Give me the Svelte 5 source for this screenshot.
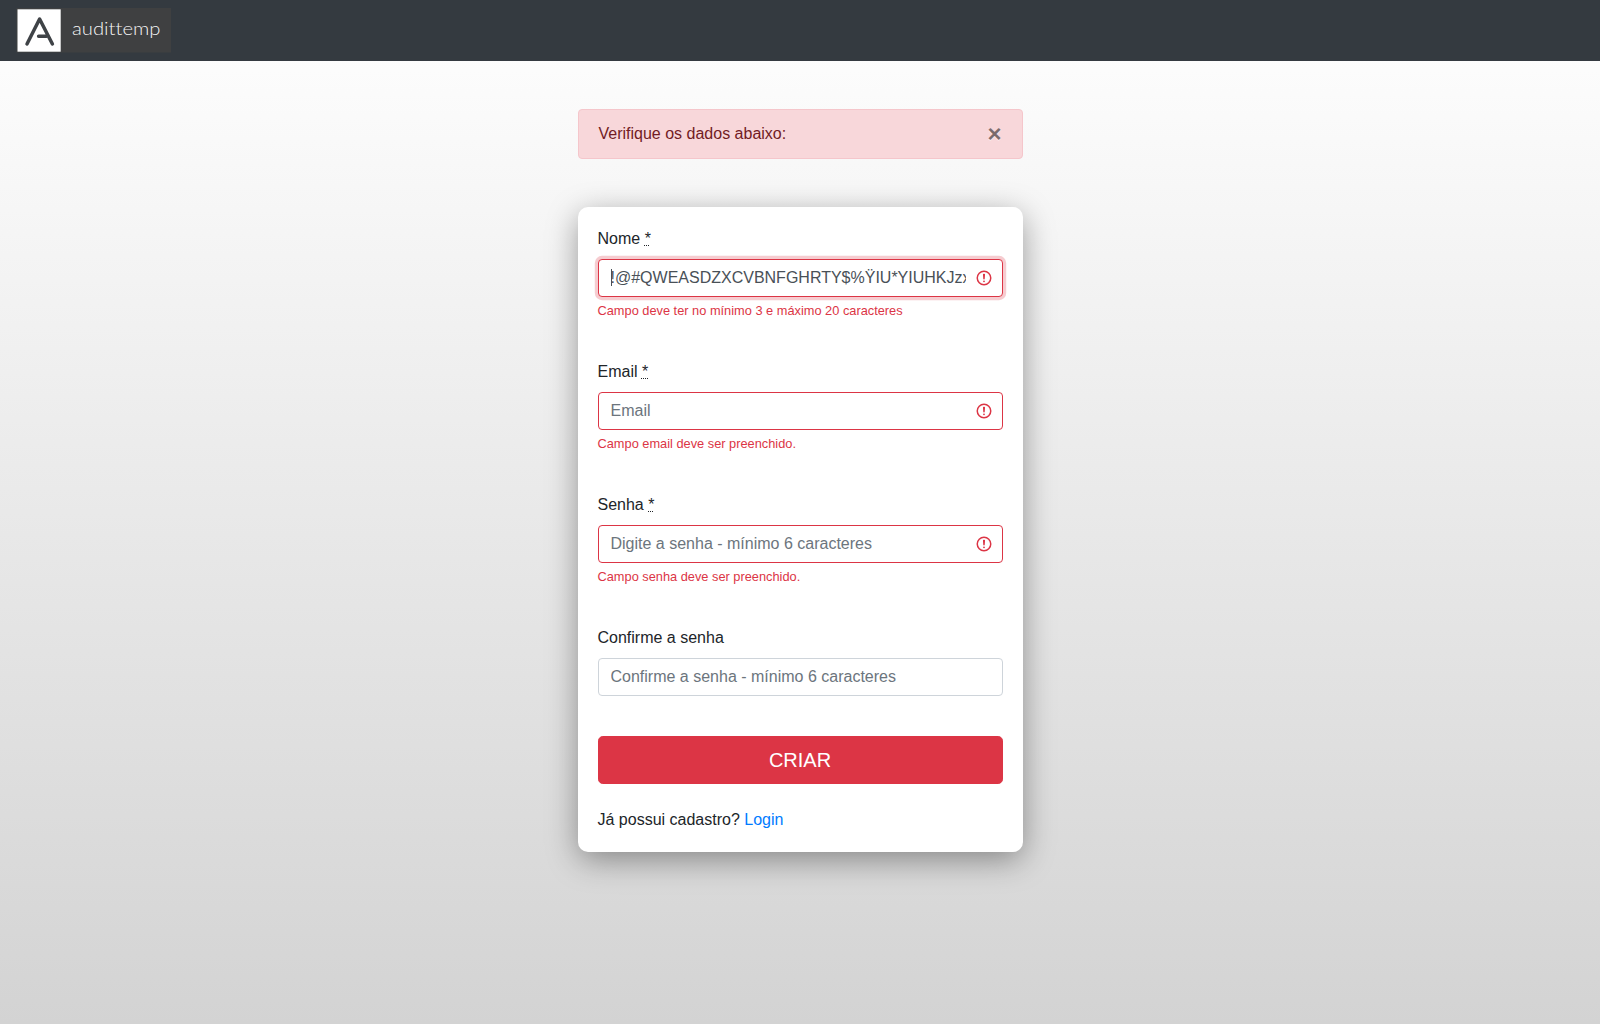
<script>
  const fields = [
    {
      id: 'nome',
      label: 'Nome',
      required: true,
      value: '!@#QWEASDZXCVBNFGHRTY$%ŸIU*YIUHKJzxcvbnm',
      placeholder: 'Nome',
      error: 'Campo deve ter no mínimo 3 e máximo 20 caracteres',
      focused: true
    },
    {
      id: 'email',
      label: 'Email',
      required: true,
      value: '',
      placeholder: 'Email',
      error: 'Campo email deve ser preenchido.'
    },
    {
      id: 'senha',
      label: 'Senha',
      required: true,
      value: '',
      placeholder: 'Digite a senha - mínimo 6 caracteres',
      error: 'Campo senha deve ser preenchido.'
    },
    {
      id: 'confirma',
      label: 'Confirme a senha',
      required: false,
      value: '',
      placeholder: 'Confirme a senha - mínimo 6 caracteres',
      error: ''
    }
  ];

  let alertOpen = $state(true);
</script>

<div class="page">
  <nav class="navbar">
    <a class="brand" href="#home" aria-label="audittemp">
      <svg width="155" height="45" viewBox="0 0 155 45">
        <rect x="0.5" width="154.5" height="44.5" fill="#3f4041" />
        <rect x="1.5" y="1.3" width="43.2" height="42.4" fill="#fff" />
        <path
          d="M11 36 L23.6 11 L36.4 36 M22.6 28.2 H30.5"
          fill="none"
          stroke="#3f4347"
          stroke-width="3.5"
          stroke-linecap="round"
          stroke-linejoin="round"
        />
        <text class="wordmark" x="56" y="26.5" textLength="88.5" lengthAdjust="spacingAndGlyphs">audittemp</text>
      </svg>
    </a>
  </nav>

  <main class="column">
    {#if alertOpen}
      <div class="alert" role="alert">
        <span>Verifique os dados abaixo:</span>
        <button class="close" type="button" aria-label="Fechar" onclick={() => (alertOpen = false)}>×</button>
      </div>
    {/if}

    <form class="card" novalidate>
      {#each fields as field (field.id)}
        <div class="group">
          <label for={field.id}>
            {field.label}
            {#if field.required}<abbr title="Obrigatório">*</abbr>{/if}
          </label>
          <div class="control">
            <input
              id={field.id}
              class:invalid={field.error}
              class:focused={field.focused}
              value={field.value}
              placeholder={field.placeholder}
              spellcheck="false"
              autocomplete="off"
            />
            {#if field.focused}<span class="caret"></span>{/if}
            {#if field.error}
              <svg class="icon" viewBox="0 0 12 12" fill="none" stroke="#dc3545">
                <circle cx="6" cy="6" r="4.5" />
                <path stroke-linejoin="round" d="M5.8 3.6h.4L6 6.5z" />
                <circle cx="6" cy="8.2" r=".6" fill="#dc3545" stroke="none" />
              </svg>
            {/if}
          </div>
          {#if field.error}<div class="feedback">{field.error}</div>{/if}
        </div>
      {/each}
      <button class="submit" type="button">CRIAR</button>
      <p class="login">Já possui cadastro? <a href="#login">Login</a></p>
    </form>
  </main>
</div>

<style>
  :global(body) {
    margin: 0;
  }

  .page,
  .page * {
    box-sizing: border-box;
  }

  .page {
    min-height: 100vh;
    background: linear-gradient(#fff, #d3d3d3);
    font: 400 16px/1.5 'Liberation Sans', Arial, sans-serif;
    color: #212529;
  }

  .navbar {
    height: 61px;
    padding: 8px 16px;
    background: #343a40;
  }

  .brand,
  .brand svg {
    display: block;
    width: 155px;
  }

  .wordmark {
    font: 300 18px Lato, sans-serif;
    font-variant-ligatures: none;
    fill: #f4f4f4;
  }

  .column {
    width: 445px;
    margin: 0 auto;
    padding-top: 48px;
  }

  .alert {
    display: flex;
    justify-content: space-between;
    align-items: center;
    height: 50px;
    margin-bottom: 48px;
    padding: 0 20px;
    border: 1px solid #f5c6cb;
    border-radius: 4px;
    background: #f8d7da;
    color: #721c24;
  }

  .close {
    padding: 0;
    border: 0;
    background: none;
    font: 700 24px/1 'Liberation Sans', Arial, sans-serif;
    color: #000;
    text-shadow: 0 1px 0 #fff;
    opacity: 0.5;
  }

  .card {
    padding: 20px;
    border-radius: 10px;
    background: #fff;
    box-shadow: 0 8px 32px -1px rgba(0, 0, 0, 0.4);
  }

  .group {
    margin-bottom: 40px;
  }

  label {
    display: block;
    margin-bottom: 8px;
  }

  abbr {
    text-decoration: underline dotted 1px;
    text-decoration-skip-ink: none;
  }

  .control {
    position: relative;
    height: 38px;
  }

  input {
    display: block;
    width: 100%;
    height: 38px;
    padding: 6px 12px;
    border: 1px solid #ced4da;
    border-radius: 4px;
    outline: 0;
    background: #fff;
    font: inherit;
    color: #495057;
  }

  input::placeholder {
    color: #6c757d;
    opacity: 1;
  }

  input.invalid {
    padding-right: 36px;
    border-color: #dc3545;
  }

  input.focused {
    box-shadow: 0 0 0 3.2px rgba(220, 53, 69, 0.25);
  }

  .caret {
    position: absolute;
    top: 10px;
    left: 13px;
    width: 1px;
    height: 17px;
    background: #495057;
  }

  .icon {
    position: absolute;
    top: 10px;
    right: 10px;
    width: 18px;
    height: 18px;
    pointer-events: none;
  }

  .feedback {
    height: 19px;
    margin-top: 4px;
    font-size: 12.8px;
    color: #dc3545;
  }

  .submit {
    display: block;
    width: 100%;
    height: 48px;
    padding: 8px 16px;
    border: 1px solid #dc3545;
    border-radius: 4.8px;
    background: #dc3545;
    font: 400 20px/1.5 'Liberation Sans', Arial, sans-serif;
    color: #fff;
  }

  .login {
    margin: 24px 0 0;
  }

  .login a {
    color: #007bff;
    text-decoration: none;
  }
</style>
